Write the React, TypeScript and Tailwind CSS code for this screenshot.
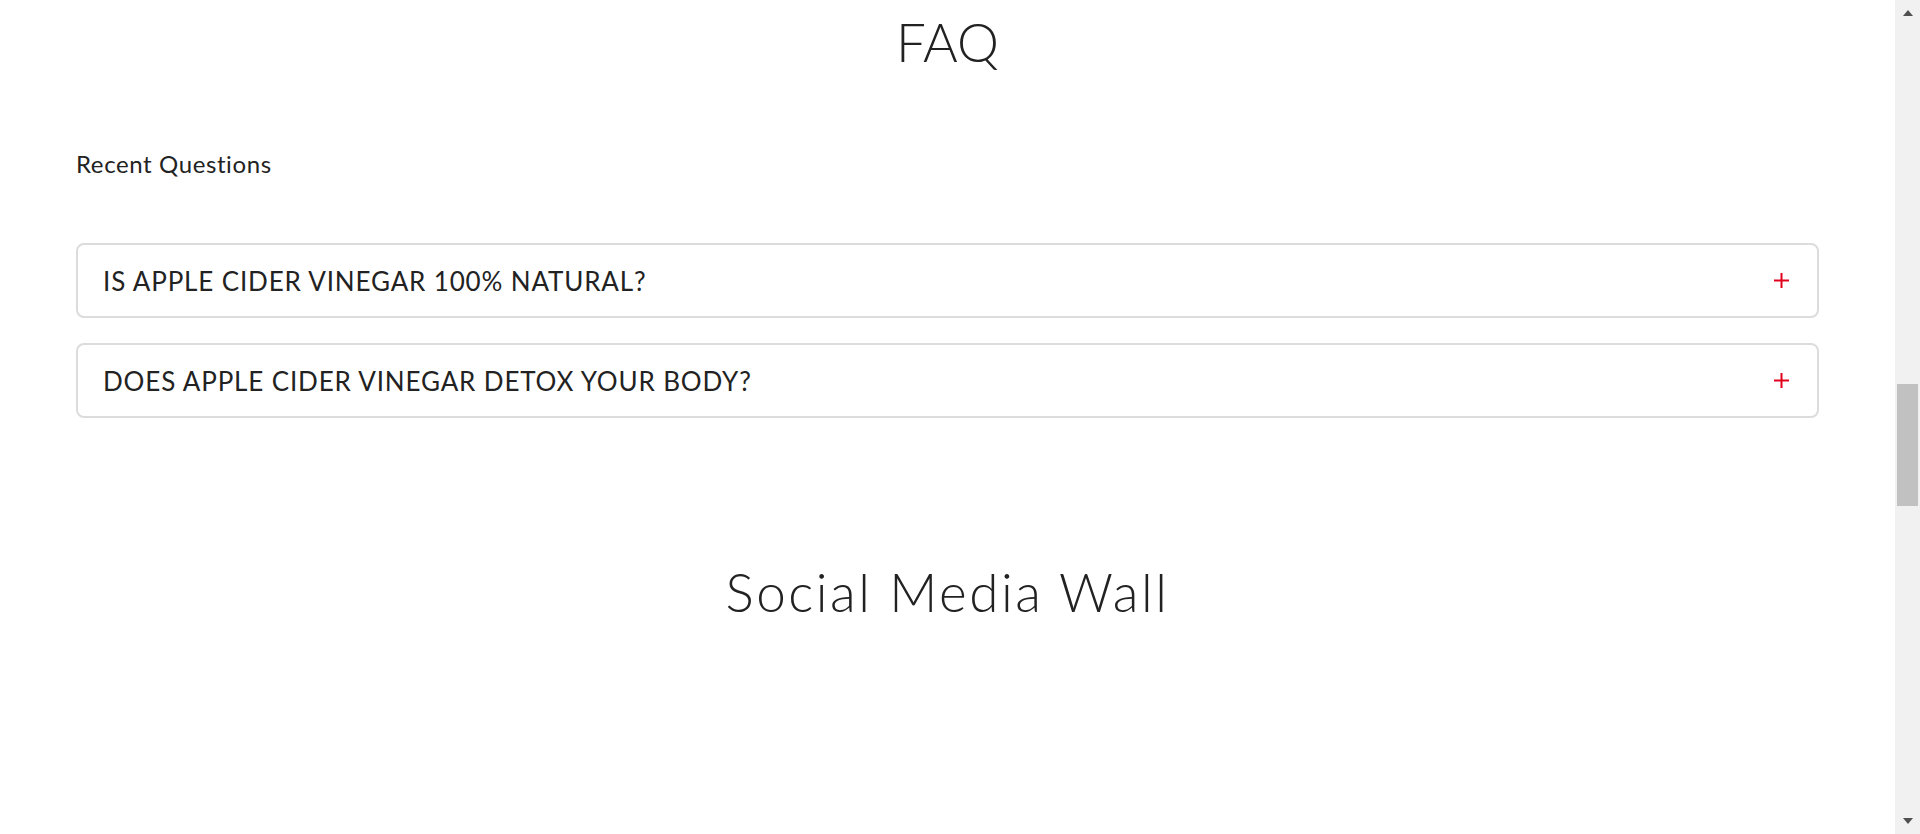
import React from "react";

const questions = [
  "IS APPLE CIDER VINEGAR 100% NATURAL?",
  "DOES APPLE CIDER VINEGAR DETOX YOUR BODY?",
];

function Plus() {
  return (
    <svg width="15" height="15" viewBox="0 0 15 15" className="shrink-0">
      <line x1="7.5" y1="0" x2="7.5" y2="15" stroke="#e1001a" strokeWidth="2" />
      <line x1="0" y1="7.5" x2="15" y2="7.5" stroke="#e1001a" strokeWidth="2" />
    </svg>
  );
}

export default function App() {
  return (
    <div
      className="flex h-[834px] w-full overflow-hidden bg-white text-[#222222]"
      style={{ fontFamily: "Lato, 'Open Sans', sans-serif" }}
    >
      <main className="flex-1 pt-[10px]">
        <h1 className="text-center text-[53px] leading-[64px] font-light">FAQ</h1>
        <div className="mx-[76px] mt-[74px]">
          <p className="text-[24px] leading-[32px] font-normal tracking-[0.6px]">Recent Questions</p>
          <div className="mt-[63px] flex flex-col gap-[25px]">
            {questions.map((q) => (
              <div
                key={q}
                className="flex h-[75px] items-center justify-between rounded-[8px] border-2 border-[#dcdcdc] pl-[25px] pr-[28px]"
              >
                <span className="text-[26px] leading-[32px] font-normal tracking-[0.85px]">{q}</span>
                <Plus />
              </div>
            ))}
          </div>
        </div>
        <h2 className="mt-[142px] text-center text-[53px] leading-[64px] font-light tracking-[2.5px]">
          Social Media Wall
        </h2>
      </main>
      <aside className="relative flex w-[25px] shrink-0 flex-col bg-[#f1f1f1]">
        <div className="flex h-[24px] items-start justify-center pt-[10px]">
          <div className="h-0 w-0 border-x-[5.5px] border-b-[6px] border-x-transparent border-b-[#505050]" />
        </div>
        <div className="ml-[2px] mt-[360px] h-[122px] w-[21px] bg-[#c1c1c1]" />
        <div className="flex-1" />
        <div className="flex h-[24px] items-start justify-center pt-[8px]">
          <div className="h-0 w-0 border-x-[5.5px] border-t-[6px] border-x-transparent border-t-[#505050]" />
        </div>
      </aside>
    </div>
  );
}
